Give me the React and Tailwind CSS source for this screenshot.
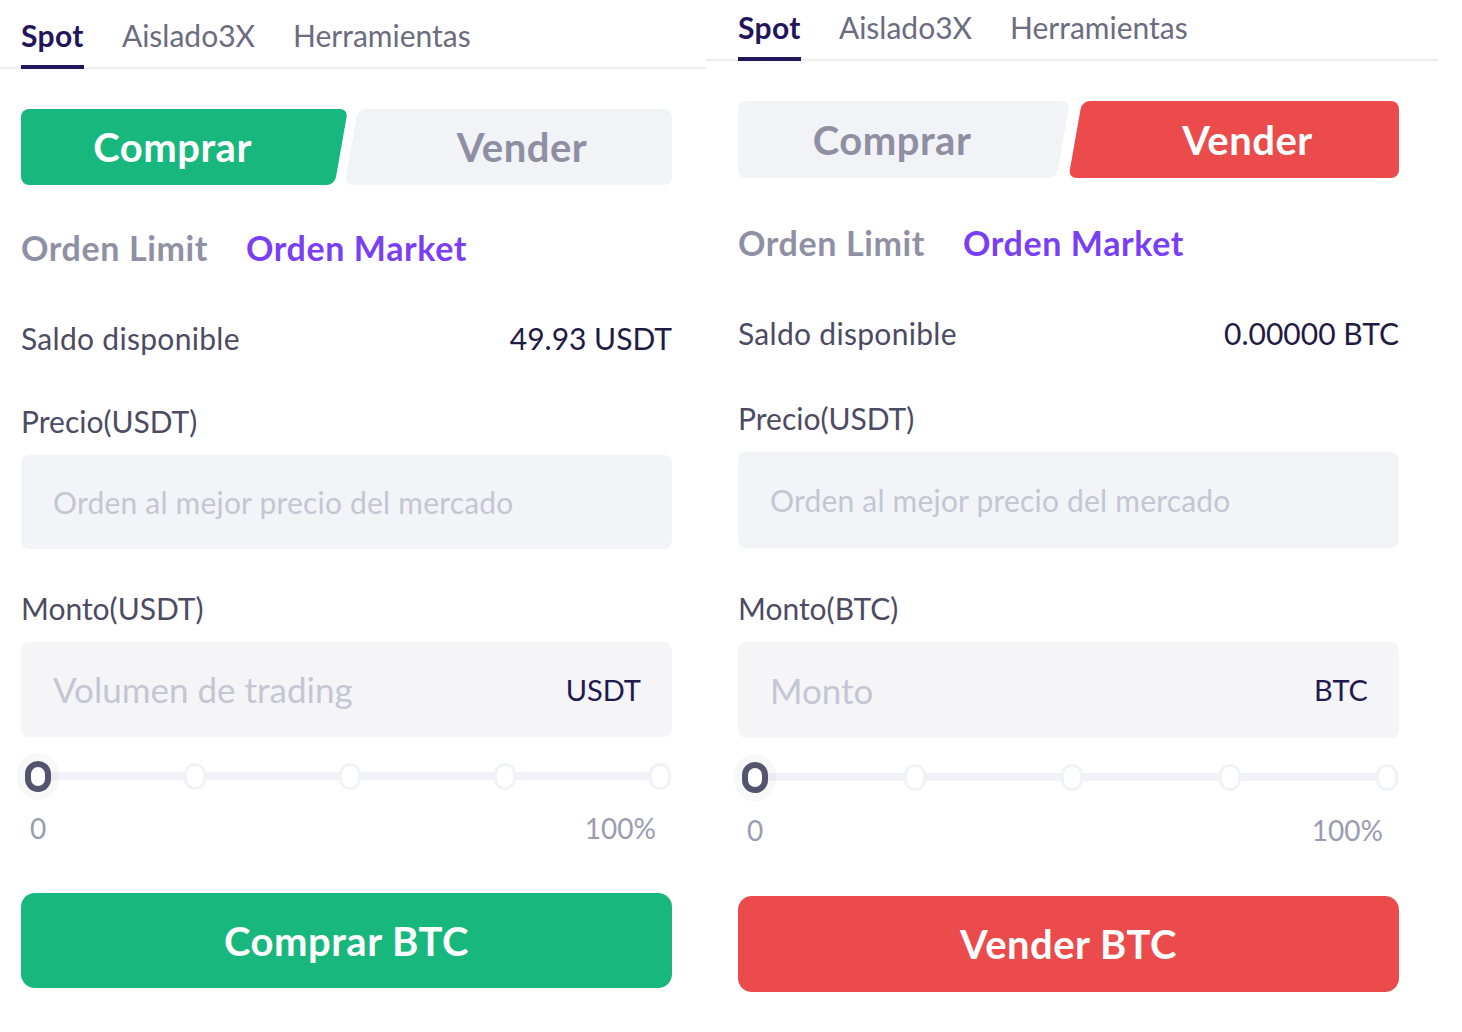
import React from "react";

const font = { fontFamily: "Lato, 'Open Sans', sans-serif" };

// two screenshots glued side by side, each with slightly different offsets
const left = {
  root: "w-[706px] shrink-0",
  tabs: "h-[69px] pl-[21px]",
  tabText: "pt-[17px]",
  body: "pl-[21px] pr-[34px]",
  toggle: "mt-[40px] h-[76px] gap-[10px]",
  toggleLeft: "w-[327px]",
  orden: "mt-[43px]",
  saldo: "mt-[52px]",
  precio: "mt-[47px]",
  input1: "mt-[16px] h-[94px]",
  monto: "mt-[41px]",
  input2: "mt-[16px] h-[95px]",
  slider: "mt-[23px]",
  labels: "mt-[20px]",
  button: "mt-[49px] h-[95px]",
};

const right = {
  root: "w-[732px] shrink-0",
  tabs: "h-[61px] pl-[32px]",
  tabText: "pt-[9px]",
  body: "pl-[32px] pr-[39px]",
  toggle: "mt-[40px] h-[77px] gap-[12px]",
  toggleLeft: "w-[332px]",
  orden: "mt-[45px]",
  saldo: "mt-[52px]",
  precio: "mt-[49px]",
  input1: "mt-[16px] h-[96px]",
  monto: "mt-[42px]",
  input2: "mt-[16px] h-[96px]",
  slider: "mt-[23px]",
  labels: "mt-[21px]",
  button: "mt-[50px] h-[96px]",
};

function Tabs({ cfg }) {
  const tabs = ["Spot", "Aislado3X", "Herramientas"];
  return (
    <div className={`flex gap-[38px] border-b-2 border-[#ececf1] ${cfg.tabs}`}>
      {tabs.map((t, i) => (
        <div key={t} className={`relative h-full ${cfg.tabText}`}>
          <span
            className={
              i === 0
                ? "text-[30px] leading-[36px] font-bold tracking-[0.4px] text-[#23155b]"
                : "text-[30px] leading-[36px] text-[#6b6c80]"
            }
          >
            {t}
          </span>
          {i === 0 && (
            <div className="absolute left-0 right-0 bottom-[-2px] h-[4px] bg-[#23155b]" />
          )}
        </div>
      ))}
    </div>
  );
}

function Toggle({ cfg, side }) {
  const buy = side === "buy";
  const leftBg = buy ? "bg-[#18b77e]" : "bg-[#f2f3f7]";
  const rightBg = buy ? "bg-[#f2f3f7]" : "bg-[#eb4b4b]";
  return (
    <div className={`flex ${cfg.toggle}`}>
      {/* left half: straight left edge, slanted right edge */}
      <div className={`relative shrink-0 ${cfg.toggleLeft}`}>
        <div className={`absolute inset-y-0 left-0 right-[40px] rounded-l-[8px] ${leftBg}`} />
        <div
          className={`absolute inset-y-0 left-[40px] right-0 rounded-[8px] origin-top skew-x-[-10deg] ${leftBg}`}
        />
        <div
          className={`relative h-full flex items-center justify-center pr-[24px] text-[40px] font-bold tracking-[0.5px] ${
            buy ? "text-white" : "text-[#8e8fa3]"
          }`}
        >
          Comprar
        </div>
      </div>
      {/* right half: slanted left edge, straight right edge */}
      <div className="relative flex-1">
        <div
          className={`absolute inset-y-0 left-0 right-[40px] rounded-[8px] origin-top skew-x-[-10deg] ${rightBg}`}
        />
        <div className={`absolute inset-y-0 left-[40px] right-0 rounded-r-[8px] ${rightBg}`} />
        <div
          className={`relative h-full flex items-center justify-center pl-[14px] text-[40px] font-bold tracking-[0.5px] ${
            buy ? "text-[#8e8fa3]" : "text-white"
          }`}
        >
          Vender
        </div>
      </div>
    </div>
  );
}

function Slider({ cfg }) {
  return (
    <div className={`relative h-[32px] flex items-center justify-between pl-[4px] pr-[1px] ${cfg.slider}`}>
      <div className="absolute left-[17px] right-[14px] top-[12px] h-[8px] bg-[#f1f2f7]" />
      <div className="relative w-[26px] h-[31px] rounded-full border-[6px] border-[#55536e] bg-white shadow-[0_0_0_8px_rgba(85,83,110,0.04)]" />
      {[1, 2, 3, 4].map((i) => (
        <div
          key={i}
          className="relative w-[22px] h-[27px] rounded-full border-[3px] border-[#f1f2f7] bg-white"
        />
      ))}
    </div>
  );
}

function Panel({ cfg, side }) {
  const buy = side === "buy";
  return (
    <div className={cfg.root}>
      <Tabs cfg={cfg} />
      <div className={cfg.body}>
        <Toggle cfg={cfg} side={side} />

        <div className={`flex gap-[38px] text-[34px] leading-[40px] font-bold tracking-[0.6px] ${cfg.orden}`}>
          <span className="text-[#8f90a3]">Orden Limit</span>
          <span className="text-[#7a3ff5]">Orden Market</span>
        </div>

        <div className={`flex justify-between text-[30px] leading-[36px] ${cfg.saldo}`}>
          <span className="text-[#4c4b63] tracking-[0.3px]">Saldo disponible</span>
          <span className="text-[#1f1b45]">{buy ? "49.93 USDT" : "0.00000 BTC"}</span>
        </div>

        <div className={`text-[30px] leading-[36px] text-[#4c4b63] ${cfg.precio}`}>
          Precio(USDT)
        </div>
        <div className={`flex items-center rounded-[8px] bg-[#f3f4f8] pl-[32px] ${cfg.input1}`}>
          <span className="text-[30px] tracking-[0.2px] text-[#c4c6d4]">
            Orden al mejor precio del mercado
          </span>
        </div>

        <div className={`text-[30px] leading-[36px] text-[#4c4b63] ${cfg.monto}`}>
          {buy ? "Monto(USDT)" : "Monto(BTC)"}
        </div>
        <div
          className={`flex items-center justify-between rounded-[8px] bg-[#f5f5f8] pl-[32px] pr-[31px] ${cfg.input2}`}
        >
          <span className="text-[35px] text-[#c4c6d4]">
            {buy ? "Volumen de trading" : "Monto"}
          </span>
          <span className="text-[29px] text-[#1f1a4f]">{buy ? "USDT" : "BTC"}</span>
        </div>

        <Slider cfg={cfg} />

        <div
          className={`flex justify-between pl-[9px] pr-[16px] text-[28px] leading-[32px] text-[#9a9cb0] ${cfg.labels}`}
        >
          <span>0</span>
          <span>100%</span>
        </div>

        <div
          className={`flex items-center justify-center rounded-[14px] text-[40px] font-bold tracking-[0.5px] text-white ${
            buy ? "bg-[#18b77e]" : "bg-[#eb4b4b]"
          } ${cfg.button}`}
        >
          {buy ? "Comprar BTC" : "Vender BTC"}
        </div>
      </div>
    </div>
  );
}

export default function App() {
  return (
    <div className="w-[1462px] h-[1032px] bg-white flex" style={font}>
      <Panel cfg={left} side="buy" />
      <Panel cfg={right} side="sell" />
    </div>
  );
}
